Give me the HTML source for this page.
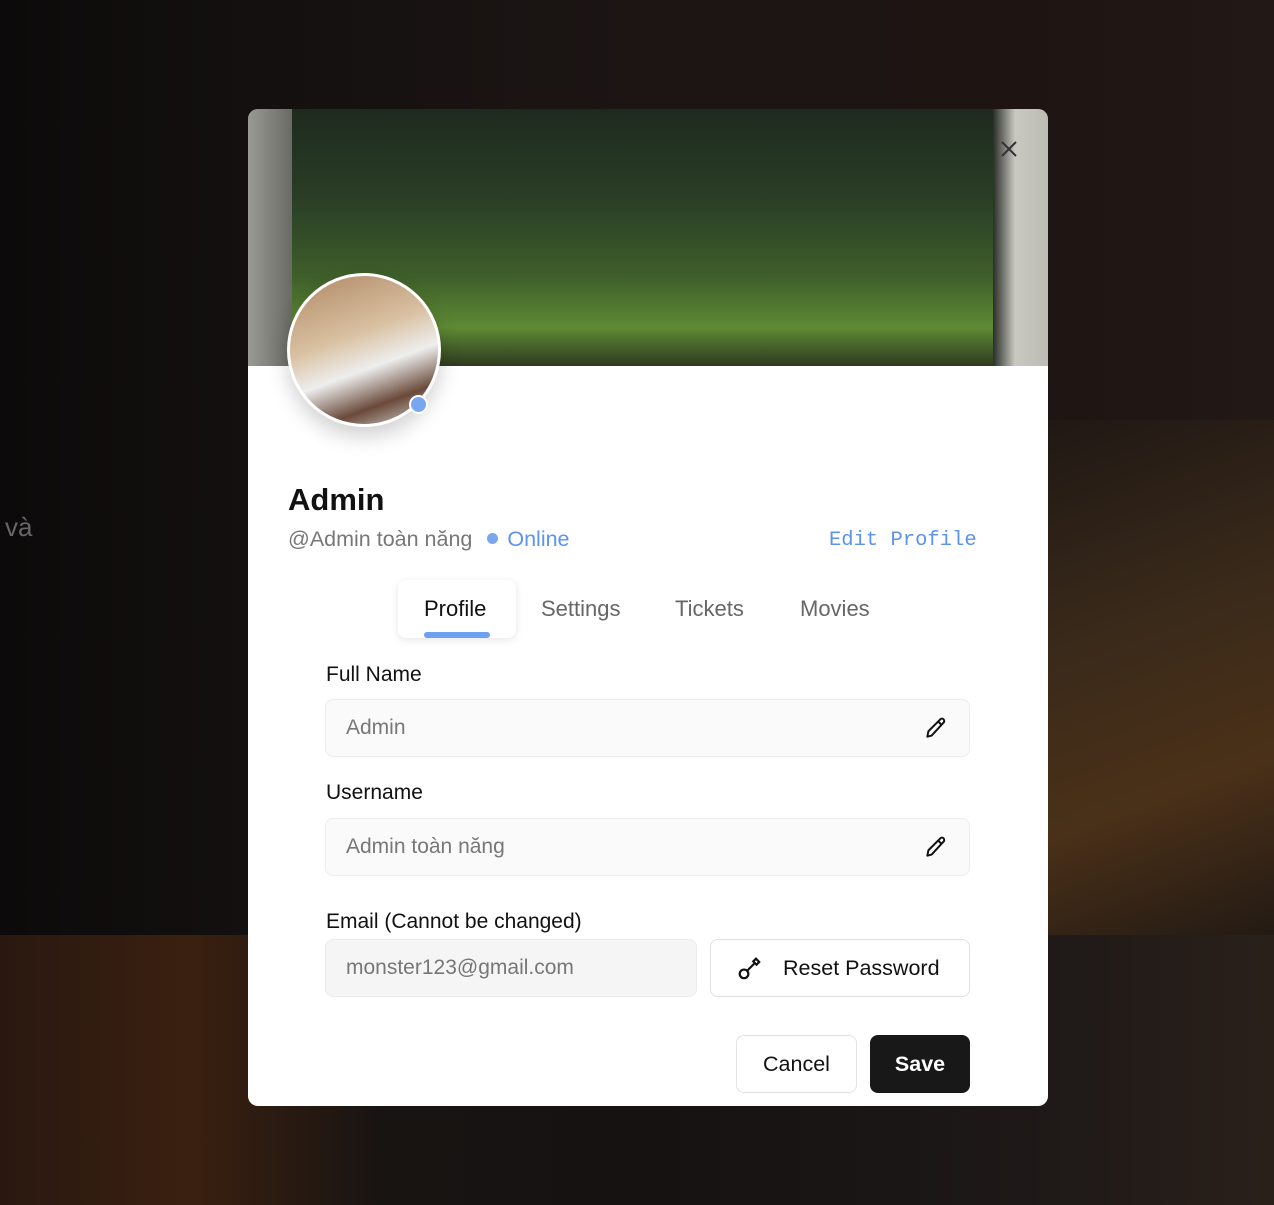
<!DOCTYPE html>
<html><head><meta charset="utf-8"><style>
*{box-sizing:border-box;margin:0;padding:0}
body{width:1274px;height:1205px;overflow:hidden;position:relative;font-family:"Liberation Sans","Noto Sans CJK SC",sans-serif;background:#161212}
.bg{position:absolute}
.modal{position:absolute;left:248px;top:109px;width:800px;height:997px;background:#fff;border-radius:10px;overflow:hidden}
.banner{position:absolute;left:0;top:0;width:800px;height:257px;background:linear-gradient(180deg,#1e2a1e 0%,#2a3e26 35%,#3e5e2a 65%,#5e8a34 85%,#2e3a20 100%)}
.lbl{position:absolute;left:78px;font-size:21px;color:#111}
.inp{position:absolute;left:77px;width:645px;height:58px;background:#fafafa;border:1px solid #ececec;border-radius:8px;font-size:21px;color:#777;padding:16px 20px}
.pen{position:absolute;right:20px;top:15px}
.tab{position:absolute;top:487px;font-size:22px;color:#666}
</style></head><body>
<div class="bg" style="left:0;top:0;width:1274px;height:935px;background:linear-gradient(90deg,#0c0a0a 0%,#141010 20%,#1c1514 50%,#1e1513 80%,#221816 100%)"></div>
<div class="bg" style="left:1048px;top:420px;width:226px;height:515px;background:linear-gradient(160deg,#201814,#3a2a1a 40%,#4a3018 70%,#231a14)"></div>
<div class="bg" style="left:0;top:935px;width:1274px;height:270px;background:linear-gradient(90deg,#2a1810 0%,#3a2010 15%,#181412 30%,#161212 50%,#1a1616 70%,#201a18 85%,#2a201a 100%)"></div>
<div class="bg" style="left:5px;top:512px;color:#666;font-size:26px">và</div>
<div class="modal">
 <div class="banner"></div>
 <div style="position:absolute;left:0;top:0;width:44px;height:257px;background:linear-gradient(90deg,#9a9a94,#6a6a64)"></div>
 <div style="position:absolute;left:745px;top:0;width:55px;height:257px;background:linear-gradient(90deg,#2a2e28,#c8c8c0 40%,#bdbdb5)"></div>
 <svg style="position:absolute;left:752px;top:31px" width="18" height="18" viewBox="0 0 18 18"><path d="M2 2L16 16M16 2L2 16" stroke="#333" stroke-width="2"/></svg>
 <div style="position:absolute;left:39px;top:164px;width:154px;height:154px;border-radius:50%;border:3px solid #fff;background:linear-gradient(160deg,#b08866 0%,#d8c0a0 40%,#eee 60%,#6a4a3a 80%,#ddd 100%);box-shadow:0 10px 20px rgba(0,0,0,.18)"></div>
 <div style="position:absolute;left:161px;top:286px;width:19px;height:19px;border-radius:50%;background:#7aa6f0;border:2px solid #fff"></div>
 <div style="position:absolute;left:40px;top:373px;font-size:31px;font-weight:700;color:#111">Admin</div>
 <div style="position:absolute;left:40px;top:418px;font-size:21.5px;color:#777">@Admin toàn năng <span style="display:inline-block;width:11px;height:11px;border-radius:50%;background:#7aa6f0;margin:0 3px 2px 9px"></span> <span style="color:#5b93ef">Online</span></div>
 <div style="position:absolute;left:581px;top:420px;font-size:20.5px;color:#5b93ef;font-family:'Liberation Mono',monospace">Edit Profile</div>
 <div style="position:absolute;left:150px;top:471px;width:118px;height:58px;background:#fff;border-radius:8px;box-shadow:0 2px 8px rgba(0,0,0,.1)"></div>
 <div style="position:absolute;left:176px;top:523px;width:66px;height:6px;border-radius:3px;background:#6ea0f0"></div>
 <div class="tab" style="left:176px;color:#111">Profile</div>
 <div class="tab" style="left:293px">Settings</div>
 <div class="tab" style="left:427px">Tickets</div>
 <div class="tab" style="left:552px">Movies</div>
 <div class="lbl" style="top:554px">Full Name</div>
 <div class="inp" style="top:590px">Admin<svg class="pen" width="26" height="26" viewBox="0 0 24 24" fill="none" stroke="#111" stroke-width="1.8" stroke-linejoin="round"><path d="M4 20l1-5L16 4a2 2 0 013 3L8 19z"/><path d="M14 6l3 3"/></svg></div>
 <div class="lbl" style="top:672px">Username</div>
 <div class="inp" style="top:709px">Admin toàn năng<svg class="pen" width="26" height="26" viewBox="0 0 24 24" fill="none" stroke="#111" stroke-width="1.8" stroke-linejoin="round"><path d="M4 20l1-5L16 4a2 2 0 013 3L8 19z"/><path d="M14 6l3 3"/></svg></div>
 <div class="lbl" style="top:801px">Email (Cannot be changed)</div>
 <div class="inp" style="top:830px;width:372px;background:#f5f5f5">monster123@gmail.com</div>
 <div style="position:absolute;left:462px;top:830px;width:260px;height:58px;border:1px solid #e2e2e2;border-radius:8px;font-size:21.5px;color:#111;padding:16px 0 0 72px">Reset Password
  <svg style="position:absolute;left:26px;top:16px" width="26" height="26" viewBox="0 0 24 24" fill="none" stroke="#111" stroke-width="2"><circle cx="6.5" cy="16.5" r="4"/><path d="M9.5 13.5l7-7"/><path d="M15 5l2.5-2.5 3 3L18 8z"/></svg></div>
 <div style="position:absolute;left:488px;top:926px;width:121px;height:58px;border:1px solid #e2e2e2;border-radius:8px;font-size:21.5px;color:#111;text-align:center;line-height:56px">Cancel</div>
 <div style="position:absolute;left:622px;top:926px;width:100px;height:58px;background:#181818;border-radius:8px;font-size:21.5px;color:#fff;font-weight:700;text-align:center;line-height:58px">Save</div>
</div>
</body></html>
